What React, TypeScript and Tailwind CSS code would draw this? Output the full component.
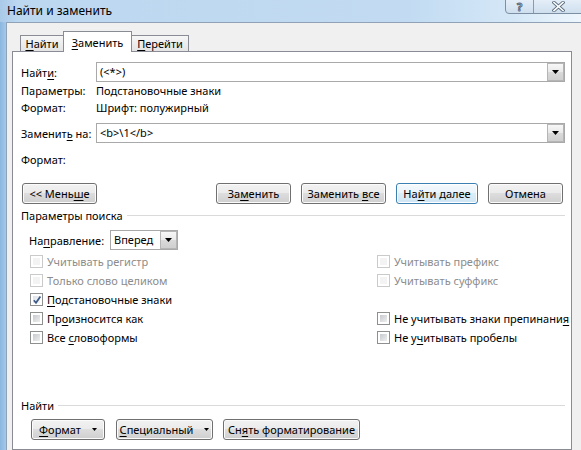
import type { ReactNode } from "react";

function U({ children }: { children: ReactNode }) {
  return <span className="underline decoration-1 underline-offset-[2px]">{children}</span>;
}

function Arrow() {
  return (
    <svg width="7" height="4" viewBox="0 0 7 4">
      <path d="M0 0h7L3.5 4z" fill="#000" />
    </svg>
  );
}

function DropButton() {
  return (
    <span className="w-[17px] shrink-0 border border-[#b5b5b5] bg-[linear-gradient(#f7f7f7,#e9e9e9_50%,#dadada_50%,#cfcfcf)] flex items-center justify-center">
      <Arrow />
    </span>
  );
}

function Combo({ value, className = "" }: { value: string; className?: string }) {
  return (
    <div className={`h-[20px] border border-[#a9a9a9] bg-white flex ${className}`}>
      <span className="flex-1 pl-[3px] leading-[18px] whitespace-pre">{value}</span>
      <DropButton />
    </div>
  );
}

function Btn({
  children,
  className = "",
  primary = false,
}: {
  children: ReactNode;
  className?: string;
  primary?: boolean;
}) {
  const look = primary
    ? "border-[#3c7fb1] bg-[linear-gradient(#f5fafd,#eaf4fb_45%,#dcedf8_50%,#cfe5f3)] shadow-[inset_0_0_0_1px_#ffffff]"
    : "border-[#707070] bg-[linear-gradient(#f2f2f2,#ebebeb_45%,#dddddd_50%,#cfcfcf)] shadow-[inset_0_0_0_1px_#fbfbfb]";
  return (
    <div className={`h-[21px] rounded-[3px] border flex items-center justify-center leading-none ${look} ${className}`}>
      {children}
    </div>
  );
}

function Check({ checked = false, disabled = false }: { checked?: boolean; disabled?: boolean }) {
  return (
    <span
      className={`relative w-[13px] h-[13px] shrink-0 border bg-white p-[2px] flex ${
        disabled ? "border-[#cacaca]" : "border-[#8e8f8f]"
      }`}
    >
      <span
        className={`flex-1 ${
          disabled
            ? "bg-[#f3f3f3]"
            : checked
            ? "bg-[linear-gradient(135deg,#dde2ea,#f7f8fa)]"
            : "bg-[linear-gradient(135deg,#c6cacf,#eeeeee)]"
        }`}
      />
      {checked && (
        <svg className="absolute left-[1px] top-[1px]" width="10" height="10" viewBox="0 0 10 10">
          <path d="M1.8 5.2 L4 7.8 L8.4 1.6" fill="none" stroke="#3d5a87" strokeWidth="1.7" />
        </svg>
      )}
    </span>
  );
}

function Option({
  children,
  checked,
  disabled,
}: {
  children?: ReactNode;
  checked?: boolean;
  disabled?: boolean;
}) {
  if (!children) return <div />;
  return (
    <div className={`flex items-center gap-[4px] ${disabled ? "text-[#8c8c8c]" : "text-black"}`}>
      <Check checked={checked} disabled={disabled} />
      <span className="leading-none">{children}</span>
    </div>
  );
}

function Section({ title }: { title: string }) {
  return (
    <div className="h-[16px] flex items-center gap-[4px]">
      <span className="leading-none">{title}</span>
      <span className="flex-1 h-px bg-[#dadada]" />
    </div>
  );
}

function SmallArrow() {
  return (
    <svg width="5" height="3" viewBox="0 0 5 3">
      <path d="M0 0h5L2.5 3z" fill="#000" />
    </svg>
  );
}

export default function App() {
  return (
    <div className="w-[581px] h-[450px] overflow-hidden flex flex-col bg-[#f0f0f0] text-[11px] text-black whitespace-nowrap font-['Noto_Sans','Liberation_Sans',sans-serif]">
      {/* title bar */}
      <div className="h-[22px] shrink-0 flex items-start bg-[linear-gradient(90deg,#a9c9e8,#bcd7f0_3%,#c2dbf2_70%,#d4e7f7_88%,#eef6fc)]">
        <span className="pl-[7px] pt-[3px] leading-[16px] text-[12px]">Найти и заменить</span>
        <div className="ml-auto -mt-px -mr-[2px] h-[15px] flex border border-[#7d8fa3] rounded-bl-[4px] bg-[linear-gradient(#e4eef8,#cfdfee)]">
          <span className="w-[28px] border-r border-[#8a9bae] flex items-center justify-center text-[11px] font-bold leading-[13px] text-white [-webkit-text-stroke:1px_#5b6b7c]">
            ?
          </span>
          <span className="w-[48px] flex items-center justify-center">
            <svg width="13" height="11" viewBox="0 0 13 11">
              <path d="M2 1.5 L11 9.5 M11 1.5 L2 9.5" stroke="#5d6d7f" strokeWidth="3.4" strokeLinecap="square" />
              <path d="M2 1.5 L11 9.5 M11 1.5 L2 9.5" stroke="#ffffff" strokeWidth="1.6" strokeLinecap="square" />
            </svg>
          </span>
        </div>
      </div>

      <div className="flex flex-1 min-h-0">
        {/* window frame */}
        <div className="w-[6px] shrink-0 bg-[linear-gradient(90deg,#8ab6df,#a5c8ea)]" />
        <div className="flex-1 flex flex-col border-l border-t border-[#8fa2b6] pl-[5px] pt-[8px]">
          {/* tabs */}
          <div className="h-[20px] flex items-end pl-[8px] shrink-0">
            <div className="w-[44px] h-[16px] border border-b-0 border-[#898c95] bg-[linear-gradient(#f6f6f6,#e4e4e4)] flex items-center justify-center leading-none">
              <span>
                <U>Н</U>айти
              </span>
            </div>
            <div className="relative z-10 -mb-px w-[69px] h-[21px] border border-b-0 border-[#898c95] bg-white flex items-center justify-center leading-none -mx-px">
              <span>
                <U>З</U>аменить
              </span>
            </div>
            <div className="w-[58px] h-[16px] border border-b-0 border-[#898c95] bg-[linear-gradient(#f6f6f6,#e4e4e4)] flex items-center justify-center leading-none">
              <span>
                <U>П</U>ерейти
              </span>
            </div>
          </div>

          {/* panel */}
          <div className="w-[560px] flex-1 border border-[#898c95] bg-white pl-[8px] pr-[6px] pt-[10px] flex flex-col">
            <div className="flex items-center">
              <span className="w-[75px] leading-none">
                Найт<U>и</U>:
              </span>
              <Combo value="(<*>)" className="flex-1" />
            </div>
            <div className="mt-[1px] h-[17px] flex items-center">
              <span className="w-[75px]">Параметры:</span>
              <span>Подстановочные знаки</span>
            </div>
            <div className="h-[17px] flex items-center">
              <span className="w-[75px]">Формат:</span>
              <span>Шрифт: полужирный</span>
            </div>
            <div className="mt-[6px] flex items-center">
              <span className="w-[75px] leading-none">
                Заменит<U>ь</U> на:
              </span>
              <Combo value="<b>\1</b>" className="flex-1" />
            </div>
            <div className="mt-[9px] h-[17px] flex items-center">Формат:</div>

            <div className="mt-[14px] flex items-center pl-px pr-[2px]">
              <Btn className="w-[75px]">
                <span>
                  {"<< Мень"}
                  <U>ш</U>е
                </span>
              </Btn>
              <div className="ml-auto flex gap-[10px]">
                <Btn className="w-[75px]">
                  <span>
                    За<U>м</U>енить
                  </span>
                </Btn>
                <Btn className="w-[85px]">
                  <span>
                    Заменить <U>в</U>се
                  </span>
                </Btn>
                <Btn className="w-[82px]" primary>
                  <span>
                    На<U>й</U>ти далее
                  </span>
                </Btn>
                <Btn className="w-[75px]">Отмена</Btn>
              </div>
            </div>

            <div className="mt-[3px]">
              <Section title="Параметры поиска" />
            </div>

            <div className="mt-[7px] flex items-center pl-[8px]">
              <span className="w-[81px] leading-none">
                На<U>п</U>равление:
              </span>
              <Combo value="Вперед" className="w-[68px]" />
            </div>

            <div className="mt-[2px] pl-[9px] grid grid-cols-[347px_1fr] auto-rows-[19px]">
              <Option disabled>Учитывать регистр</Option>
              <Option disabled>Учитывать префикс</Option>
              <Option disabled>Только слово целиком</Option>
              <Option disabled>Учитывать суффикс</Option>
              <Option checked>
                <U>П</U>одстановочные знаки
              </Option>
              <Option />
              <Option>
                Пр<U>о</U>износится как
              </Option>
              <Option>
                Не учитывать знаки препинани<U>я</U>
              </Option>
              <Option>
                Все <U>с</U>ловоформы
              </Option>
              <Option>
                Не у<U>ч</U>итывать пробелы
              </Option>
            </div>

            <div className="mt-[50px]">
              <Section title="Найти" />
            </div>

            <div className="mt-[6px] pl-[10px] flex gap-[10px]">
              <Btn className="w-[74px]">
                <span className="flex items-center gap-[11px]">
                  <span>
                    <U>Ф</U>ормат
                  </span>
                  <SmallArrow />
                </span>
              </Btn>
              <Btn className="w-[97px] ml-px">
                <span className="flex items-center gap-[11px]">
                  <span>
                    <U>С</U>пециальный
                  </span>
                  <SmallArrow />
                </span>
              </Btn>
              <Btn className="w-[137px]">
                <span>
                  Сн<U>я</U>ть форматирование
                </span>
              </Btn>
            </div>
          </div>
        </div>
      </div>
    </div>
  );
}
